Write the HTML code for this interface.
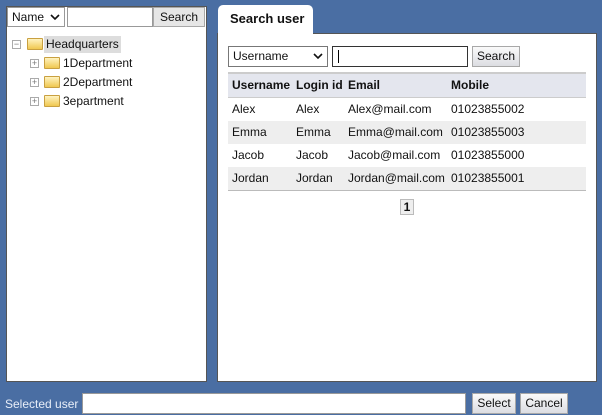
<!DOCTYPE html>
<html><head><style>
*{box-sizing:border-box;margin:0;padding:0}
body{width:602px;height:415px;background:#4a6ea3;font-family:"Liberation Sans","Noto Sans CJK KR",sans-serif;font-size:12px;color:#111;position:relative;overflow:hidden}
.abs{position:absolute}
.btn{position:absolute;background:linear-gradient(#fafafa,#dcdde2);border:1px solid #a8a8a8;font-size:12px;text-align:center;line-height:18px;color:#111}
.inp{position:absolute;background:#fff;border:1px solid #888}
.folder{position:absolute;width:16px;height:12px;background:linear-gradient(#fff3c0,#f0c850);border:1px solid #c9a040;border-radius:1px}
.pm{position:absolute;width:9px;height:9px;border:1px solid #aaa;font-size:9px;line-height:7px;text-align:center;color:#777;background:#fff}
.row{position:absolute;left:228px;width:358px;height:23px;line-height:23px}
.row span{position:absolute}
.chev{position:absolute;right:4px;top:6px}
</style></head><body>
<div class="abs" style="left:6px;top:6px;width:201px;height:376px;background:#fff;border:1px solid #555"></div>
<div class="inp" style="left:7px;top:7px;width:58px;height:20px;line-height:18px;padding-left:4px;border-color:#999">Name <svg class="chev" width="10" height="7"><path d="M1 1L5 5L9 1" fill="none" stroke="#111" stroke-width="1.6"/></svg></div>
<div class="inp" style="left:67px;top:7px;width:86px;height:20px;border-color:#999"></div>
<div class="btn" style="left:153px;top:7px;width:52px;height:20px;background:#e6e6e6">Search</div>
<div class="pm" style="left:12px;top:40px">−</div>
<div class="folder" style="left:27px;top:38px"></div>
<div class="abs" style="left:44px;top:36px;height:17px;line-height:17px;padding:0 2px;background:#ddd">Headquarters</div>
<div class="pm" style="left:30px;top:59px">+</div><div class="folder" style="left:44px;top:57px"></div><div class="abs" style="left:63px;top:55px;line-height:17px">1Department</div>
<div class="pm" style="left:30px;top:78px">+</div><div class="folder" style="left:44px;top:76px"></div><div class="abs" style="left:63px;top:74px;line-height:17px">2Department</div>
<div class="pm" style="left:30px;top:97px">+</div><div class="folder" style="left:44px;top:95px"></div><div class="abs" style="left:63px;top:93px;line-height:17px">3epartment</div>

<div class="abs" style="left:217px;top:33px;width:380px;height:349px;background:#fff;border:1px solid #555"></div>
<div class="abs" style="left:218px;top:5px;width:95px;height:30px;background:#fff;border-radius:5px 5px 0 0;font-weight:bold;font-size:13px;line-height:28px;padding-left:12px">Search user</div>
<div class="inp" style="left:228px;top:46px;width:100px;height:21px;line-height:19px;padding-left:4px;border-color:#777">Username<svg class="chev" width="10" height="7"><path d="M1 1L5 5L9 1" fill="none" stroke="#111" stroke-width="1.6"/></svg></div>
<div class="inp" style="left:332px;top:46px;width:136px;height:21px;border-color:#333"><div style="position:absolute;left:5px;top:3px;width:1px;height:13px;background:#000"></div></div>
<div class="btn" style="left:472px;top:46px;width:48px;height:21px">Search</div>
<div class="abs" style="left:228px;top:72px;width:358px;height:2px;background:#ccc"></div>
<div class="row" style="top:74px;height:24px;background:#e4e6ee;font-weight:bold;border-bottom:1px solid #ccc"><span style="left:4px">Username</span><span style="left:68px">Login id</span><span style="left:120px">Email</span><span style="left:223px">Mobile</span></div>
<div class="row" style="top:98px"><span style="left:4px">Alex</span><span style="left:68px">Alex</span><span style="left:120px">Alex@mail.com</span><span style="left:223px">01023855002</span></div>
<div class="row" style="top:121px;background:#eee"><span style="left:4px">Emma</span><span style="left:68px">Emma</span><span style="left:120px">Emma@mail.com</span><span style="left:223px">01023855003</span></div>
<div class="row" style="top:144px"><span style="left:4px">Jacob</span><span style="left:68px">Jacob</span><span style="left:120px">Jacob@mail.com</span><span style="left:223px">01023855000</span></div>
<div class="row" style="top:167px;background:#eee;border-bottom:1px solid #bbb;height:24px"><span style="left:4px">Jordan</span><span style="left:68px">Jordan</span><span style="left:120px">Jordan@mail.com</span><span style="left:223px">01023855001</span></div>
<div class="abs" style="left:400px;top:199px;width:14px;height:16px;border:1px solid #bbb;background:#eee;font-weight:bold;text-align:center;line-height:14px">1</div>

<div class="abs" style="left:5px;top:395px;color:#e8eef8;line-height:18px">Selected user</div>
<div class="inp" style="left:82px;top:393px;width:384px;height:21px;border-color:#999"></div>
<div class="btn" style="left:472px;top:393px;width:44px;height:21px">Select</div>
<div class="btn" style="left:520px;top:393px;width:48px;height:21px">Cancel</div>
</body></html>
